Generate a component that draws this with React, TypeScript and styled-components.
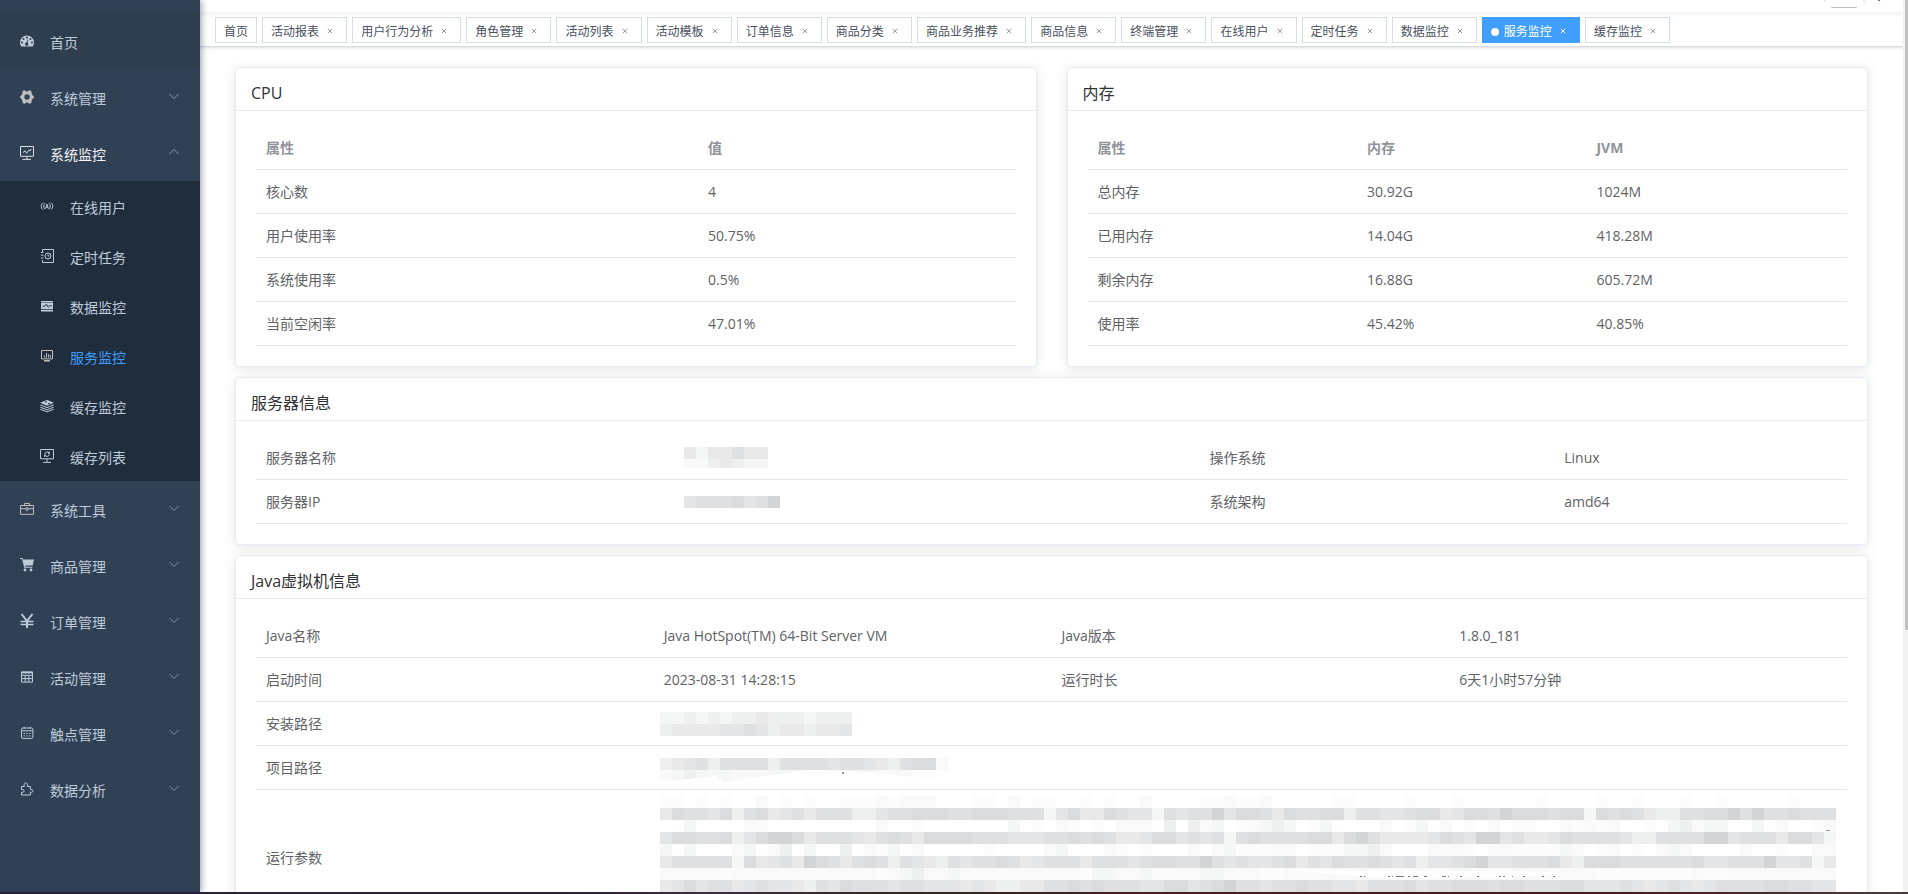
import React from "react";
import styled, { createGlobalStyle, css } from "styled-components";

const GlobalStyle = createGlobalStyle`
  *, *::before, *::after { box-sizing: border-box; }
  html, body { margin: 0; padding: 0; }
  body {
    font-family: "Open Sans", "Noto Sans CJK SC", sans-serif;
    font-size: 14px;
    color: #303133;
    background: #fff;
  }
  a { color: inherit; text-decoration: none; }
  button { font: inherit; color: inherit; border: 0; padding: 0; background: none; cursor: pointer; }
`;

/* ---------- page frame ---------- */

const Page = styled.div`
  display: grid;
  grid-template-columns: 200px minmax(0, 1fr) 5px;
  grid-template-rows: minmax(0, 1fr) 2px;
  height: 100vh;
  overflow: hidden;
`;

const Sidebar = styled.nav`
  position: relative;
  z-index: 2;
  padding-top: 13px;
  background: #304156;
  box-shadow: 2px 0 6px rgba(0, 21, 41, 0.35);
`;

const Main = styled.main`
  overflow: hidden;
`;

const ScrollTrack = styled.div`
  padding-left: 2px;
  background: #f2f2f2;
`;

const ScrollThumb = styled.div`
  height: 70.6%;
  background: #c0c0c0;
`;

const BottomEdge = styled.div`
  grid-column: 1 / -1;
  position: relative;
  z-index: 3;
  background: linear-gradient(90deg, #2a2138, #2b1f30 30%, #3f2c42 37%, #33261f 48%, #45201f 60%, #471a1a 85%, #4a3c3c);
`;

/* ---------- sidebar ---------- */

const MenuList = styled.ul`
  margin: 0;
  padding: 0;
  list-style: none;
`;

const itemLayout = css`
  display: flex;
  align-items: center;
  width: 100%;
  color: #bfcbd9;
  font-size: 14px;
  text-align: left;
`;

const RootLink = styled.a`
  ${itemLayout}
  height: 56px;
  padding: 0 20px;
  background: #2e3e4e;
`;

const RootButton = styled.button<{ $open?: boolean }>`
  ${itemLayout}
  height: 56px;
  padding: 0 20px;
  color: ${(p) => (p.$open ? "#f4f4f5" : "#bfcbd9")};
`;

const SubList = styled(MenuList)`
  background: #1f2d3d;
`;

const SubLink = styled.a<{ $active?: boolean }>`
  ${itemLayout}
  height: 50px;
  padding: 0 40px;
  color: ${(p) => (p.$active ? "#409eff" : "#bfcbd9")};
`;

const MenuLabel = styled.span`
  flex: 1;
  margin-left: 16px;
  padding-top: 3px;
  line-height: 20px;
`;

const MenuIcon = styled.svg<{ $tone?: string }>`
  flex: none;
  width: 14px;
  height: 14px;
  overflow: visible;
  color: ${(p) => p.$tone || "#bfcbd9"};
  fill: none;
  stroke: currentColor;
  stroke-width: 1;
`;

const Chevron = styled.svg<{ $up?: boolean }>`
  flex: none;
  width: 12px;
  height: 12px;
  margin-bottom: 2px;
  fill: none;
  stroke: #8a95a3;
  transform: ${(p) => (p.$up ? "rotate(180deg)" : "none")};
`;

type IconName =
  | "dashboard" | "gear" | "monitor" | "online" | "job" | "druid" | "server"
  | "redis" | "redisList" | "tool" | "cart" | "yen" | "table" | "calendar" | "puzzle";

const glyphs: Record<IconName, React.ReactNode> = {
  dashboard: (
    <path
      fill="currentColor"
      stroke="none"
      fillRule="evenodd"
      d="M7 1.4a7 7 0 0 0-7 7c0 1.4.4 2.6 1 3.7.1.2.3.3.5.3h11c.2 0 .4-.1.5-.3.6-1.1 1-2.3 1-3.7a7 7 0 0 0-7-7zM2 7.4a1 1 0 1 0 0 2 1 1 0 0 0 0-2zM3.5 3.9a1 1 0 1 0 0 2 1 1 0 0 0 0-2zM7 2.4a1 1 0 1 0 0 2 1 1 0 0 0 0-2zM10.5 3.9a1 1 0 1 0 0 2 1 1 0 0 0 0-2zM12 7.4a1 1 0 1 0 0 2 1 1 0 0 0 0-2zM7.5 5.4l.8.2-.7 3.2a1.6 1.6 0 1 1-1-.2z"
    />
  ),
  gear: (
    <path
      fill="currentColor"
      stroke="none"
      fillRule="evenodd"
      d="M3.6.4L5 .2 6 1.400h2L9 .2l1.400.2 1 .8.2 2.300 1 1.700L14 6.400v1.200l-1.400 1.200-1 1.700-.2 2.300-1 .8-1.400.2-1-1.200H6l-1 1.200-1.400-.2-1-.8-.2-2.300-1-1.700L0 7.600V6.400l1.400-1.200 1-1.700.2-2.300zM7 4.300a2.700 2.700 0 1 0 0 5.400 2.700 2.700 0 0 0 0-5.400z"
    />
  ),
  monitor: (
    <>
      <path d="M.5.5h13v9.8H.5z" />
      <path d="M3 6.6l2-1.8 1.6 2.4L9.2 4l.6 1 1.4-2" />
      <path d="M7 10.5V13M2.5 13.4h8.5" />
    </>
  ),
  online: (
    <>
      <path d="M2.9 3.6C.7 5.4.7 8.8 2.9 10.6M5 4.2C3.3 5.6 3.3 8.6 5 10M11.1 3.6c2.2 1.8 2.2 5.2 0 7M9 4.2c1.7 1.4 1.7 4.4 0 5.8" />
      <path d="M5.6 9.6L7 5.2l1.4 4.4M6.2 8.3h1.6" />
    </>
  ),
  job: (
    <>
      <path d="M2.5 3V.5h11v13h-11V11M1 3.5h2.4M1 6.2h2.4M1 9h2.4" />
      <circle cx="8" cy="7" r="3" />
      <path d="M8 5.4V7h1.6" />
    </>
  ),
  druid: (
    <>
      <path fill="currentColor" stroke="none" d="M1 2h12v1.2H1zM1 3.800h12v6.400H1zM1 11h12v1.500H1z" />
      <path stroke="#1f2d3d" d="M2.6 7.2h2.2l1.6-2 1.8 3 1.4-1.4H12" />
    </>
  ),
  server: (
    <>
      <path d="M1.5 1.5h11v8.4h-11z" />
      <path d="M4.6 8.6V6.4M6.6 8.6V4M8.6 8.6V5.2M10.4 8.6V6" />
      <path strokeWidth="1.5" d="M4 11.8h6" />
    </>
  ),
  redis: (
    <>
      <path fill="currentColor" stroke="none" d="M7 1l7 2.8-7 2.9L0 3.8z" />
      <path d="M.3 6L7 8.6 13.7 6M.3 8.2L7 10.8l6.7-2.6M.3 10.3L7 12.8l6.7-2.5" />
      <path stroke="#1f2d3d" d="M5 3h2M8 4.6h2" />
    </>
  ),
  redisList: (
    <>
      <path d="M.5.5h13v9.3H.5z" />
      <path d="M9.2 4.2A2.4 2.4 0 0 0 4.7 5M4.8 6.2a2.4 2.4 0 0 0 4.5-.8M9.4 2.6v1.8H8M4.6 7.8V6h1.6" />
      <path d="M7 10v3M3 13.4h8" />
    </>
  ),
  tool: (
    <>
      <path d="M.5 3.5h13v8.8H.5zM4.5 3.3V1.4h5v1.9M.5 6.7h4.8M8.7 6.7h4.8" />
      <path d="M6 5.8h2v2.4H6z" />
    </>
  ),
  cart: (
    <>
      <path fill="currentColor" stroke="none" d="M0 0h2.6l.5 1.4H14l-1.3 6.2H5.2l.3 1.2h6.9v1H4.2L2.1 1.1H0z" />
      <circle cx="5" cy="12" r="1.4" fill="currentColor" stroke="none" />
      <circle cx="11" cy="12" r="1.4" fill="currentColor" stroke="none" />
    </>
  ),
  yen: (
    <>
      <path strokeWidth="2" d="M1.500 0L7 7 12.500 0M7 7v7" />
      <path strokeWidth="1.300" d="M.5 7.500h13M.5 10.500h13" />
    </>
  ),
  table: (
    <>
      <path d="M1.5 1.9h11v10.2h-11z" />
      <path strokeWidth="1.6" d="M1.5 2.6h11" />
      <path d="M1.5 5.3h11M1.5 8.6h11M5.2 5v7M8.8 5v7" />
    </>
  ),
  calendar: (
    <>
      <rect x="1.5" y="2" width="11.4" height="10.4" rx="1.4" />
      <path d="M1.5 4.8h11.4M4.2.8v2M10.2.8v2" />
      <path strokeDasharray="1.4 1.3" d="M3.6 7.5h7.6M3.6 9.9h7.6" />
    </>
  ),
  puzzle: (
    <path d="M1.500 4.500h2.700V2.500c0-1 .6-1.700 1.600-1.700s1.600.7 1.600 1.700v2h3v3h1c1 0 1.600.6 1.600 1.400s-.6 1.400-1.600 1.400h-1v2.700H1.500v-2.700h1.200c.9 0 1.400-.6 1.400-1.400s-.5-1.400-1.400-1.400H1.500z" />
  ),
};

function Icon({ name, tone }: { name: IconName; tone?: string }) {
  return (
    <MenuIcon viewBox="0 0 14 14" $tone={tone} aria-hidden="true">
      {glyphs[name]}
    </MenuIcon>
  );
}

interface SubItem { label: string; icon: IconName; active?: boolean; tone?: string }
interface RootItem { label: string; icon: IconName; tone?: string; children?: SubItem[] }

const menu: RootItem[] = [
  { label: "系统管理", icon: "gear", tone: "#bfbfbf" },
  {
    label: "系统监控",
    icon: "monitor",
    tone: "#d9dce1",
    children: [
      { label: "在线用户", icon: "online" },
      { label: "定时任务", icon: "job" },
      { label: "数据监控", icon: "druid" },
      { label: "服务监控", icon: "server", active: true, tone: "#bfbfbf" },
      { label: "缓存监控", icon: "redis" },
      { label: "缓存列表", icon: "redisList" },
    ],
  },
  { label: "系统工具", icon: "tool", tone: "#bfbfbf" },
  { label: "商品管理", icon: "cart" },
  { label: "订单管理", icon: "yen" },
  { label: "活动管理", icon: "table" },
  { label: "触点管理", icon: "calendar" },
  { label: "数据分析", icon: "puzzle" },
];

function SideMenu() {
  return (
    <Sidebar aria-label="主菜单">
      <MenuList>
        <li>
          <RootLink href="#home">
            <Icon name="dashboard" />
            <MenuLabel>首页</MenuLabel>
          </RootLink>
        </li>
        {menu.map((item) => (
          <li key={item.label}>
            <RootButton type="button" $open={!!item.children} aria-expanded={!!item.children}>
              <Icon name={item.icon} tone={item.tone} />
              <MenuLabel>{item.label}</MenuLabel>
              <Chevron viewBox="0 0 12 12" $up={!!item.children} aria-hidden="true">
                <path d="M1.500 4L6 8.500 10.500 4" />
              </Chevron>
            </RootButton>
            {item.children && (
              <SubList>
                {item.children.map((sub) => (
                  <li key={sub.label}>
                    <SubLink href={`#${sub.icon}`} $active={sub.active}>
                      <Icon name={sub.icon} tone={sub.tone} />
                      <MenuLabel>{sub.label}</MenuLabel>
                    </SubLink>
                  </li>
                ))}
              </SubList>
            )}
          </li>
        ))}
      </MenuList>
    </Sidebar>
  );
}

/* ---------- top bar and page tabs ---------- */

const Navbar = styled.header`
  display: flex;
  justify-content: flex-end;
  height: 13px;
  padding-right: 20px;
  box-shadow: 0 1px 4px rgba(0, 21, 41, 0.08);
`;

const AvatarEdge = styled.svg`
  width: 60px;
  height: 10px;
`;

const TagBar = styled.div`
  height: 34px;
  padding: 4px 15px 0;
  overflow: hidden;
  white-space: nowrap;
  border-bottom: 1px solid #d8dce5;
`;

const TagBarShadow = styled.div`
  box-shadow: 0 1px 3px 0 rgba(0, 0, 0, 0.12), 0 0 3px 0 rgba(0, 0, 0, 0.04);
`;

const TagRow = styled.div`
  display: flex;
  gap: 5px;
`;

const Tag = styled.div<{ $active?: boolean }>`
  flex: none;
  height: 26px;
  padding: 0 8px;
  border: 1px solid ${(p) => (p.$active ? "#409eff" : "#d8dce5")};
  background: ${(p) => (p.$active ? "#409eff" : "#fff")};
  color: ${(p) => (p.$active ? "#fff" : "#495060")};
  font-size: 12px;
  line-height: 28px;
`;

const Dot = styled.i`
  display: inline-block;
  width: 8px;
  height: 8px;
  margin-right: 5px;
  border-radius: 50%;
  background: #fff;
`;

const CloseButton = styled.button`
  width: 16px;
  height: 16px;
  line-height: 16px;
  vertical-align: -3px;
`;

const Cross = styled.svg<{ $active?: boolean }>`
  display: block;
  width: 16px;
  height: 16px;
  fill: none;
  stroke: ${(p) => (p.$active ? "#fff" : "#9a9ea6")};
`;

const tags = [
  "首页", "活动报表", "用户行为分析", "角色管理", "活动列表", "活动模板", "订单信息", "商品分类",
  "商品业务推荐", "商品信息", "终端管理", "在线用户", "定时任务", "数据监控", "服务监控", "缓存监控",
];

function TagsView() {
  return (
    <TagBarShadow>
      <TagBar>
        <TagRow>
          {tags.map((name, i) => {
            const active = name === "服务监控";
            return (
              <Tag key={name} $active={active}>
                {active && <Dot />}
                <a href={`#tag-${i}`}>{name}</a>
                {i > 0 && (
                  <>
                    {" "}
                    <CloseButton type="button" aria-label={`关闭${name}`}>
                      <Cross viewBox="0 0 16 16" $active={active} aria-hidden="true">
                        <path d="M5.800 5.800l4.400 4.400M10.200 5.800l-4.400 4.400" />
                      </Cross>
                    </CloseButton>
                  </>
                )}
              </Tag>
            );
          })}
        </TagRow>
      </TagBar>
    </TagBarShadow>
  );
}

/* ---------- cards and tables ---------- */

const Content = styled.div`
  display: grid;
  grid-template-columns: repeat(2, minmax(0, 1fr));
  column-gap: 30px;
  row-gap: 10px;
  padding: 20px 35px;
`;

const CardBox = styled.section<{ $wide?: boolean }>`
  grid-column: ${(p) => (p.$wide ? "1 / -1" : "auto")};
  border: 1px solid #e6ebf5;
  border-radius: 4px;
  background: #fff;
  box-shadow: 0 2px 12px 0 rgba(0, 0, 0, 0.1);
`;

const CardTitle = styled.h2`
  margin: 0;
  padding: 15px 15px 6px;
  border-bottom: 1px solid #e6ebf5;
  font-size: 16px;
  font-weight: 400;
  line-height: 21px;
`;

const CardBody = styled.div`
  padding: 15px 20px 20px;
`;

const Table = styled.table`
  width: 100%;
  table-layout: fixed;
  border-collapse: separate;
  border-spacing: 0;
  color: #606266;
  font-size: 14px;
`;

const cell = css`
  height: 44px;
  padding: 0 10px;
  border-bottom: 1px solid #dfe6ec;
  line-height: 23px;
  text-align: left;
  vertical-align: middle;
`;

const Th = styled.th`
  ${cell}
  color: #909399;
  font-weight: 700;
`;

const Td = styled.td`
  ${cell}
`;

const MosaicTd = styled.td<{ $inset?: number }>`
  ${cell}
  padding: 0 0 0 ${(p) => p.$inset ?? 6}px;
`;

const ParamTd = styled.td`
  height: 134px;
  padding: 0 10px;
  line-height: 23px;
`;

const ParamMosaicTd = styled.td`
  padding: 6px 0 0 6px;
  vertical-align: top;
`;

const MosaicSvg = styled.svg`
  display: block;
  shape-rendering: crispEdges;
`;

const Col = styled.col<{ $w: number }>`
  width: ${(p) => p.$w}%;
`;

function Card({ title, wide, children }: { title: string; wide?: boolean; children: React.ReactNode }) {
  return (
    <CardBox $wide={wide}>
      <CardTitle>{title}</CardTitle>
      <CardBody>{children}</CardBody>
    </CardBox>
  );
}

function DataTable({ widths, head, rows }: { widths: number[]; head: string[]; rows: string[][] }) {
  return (
    <Table>
      <colgroup>
        {widths.map((w, i) => (
          <Col key={i} $w={w} />
        ))}
      </colgroup>
      <thead>
        <tr>
          {head.map((h) => (
            <Th key={h} scope="col">{h}</Th>
          ))}
        </tr>
      </thead>
      <tbody>
        {rows.map((r) => (
          <tr key={r[0]}>
            {r.map((c) => (
              <Td key={c}>{c}</Td>
            ))}
          </tr>
        ))}
      </tbody>
    </Table>
  );
}

/* Redacted values: each digit is one 12px block, 0 is blank and 9 is darkest. */
const shades = ["", "#fcfcfc", "#f9f9f9", "#f5f6f6", "#eeefef", "#e9e9ea", "#e4e5e6", "#dfe0e1", "#dadbdc", "#d3d4d5"];

function Mosaic({ rows, heights, children }: { rows: string[]; heights: number[]; children?: React.ReactNode }) {
  const width = Math.max(...rows.map((r) => r.length)) * 12;
  const height = heights.reduce((a, b) => a + b, 0);
  let y = 0;
  return (
    <MosaicSvg width={width} height={height} viewBox={`0 0 ${width} ${height}`} role="img" aria-label="已隐藏">
      {rows.map((row, r) => {
        const top = y;
        y += heights[r];
        return row.split("").map((d, c) =>
          d === "0" ? null : (
            <rect key={`${r}-${c}`} x={c * 12} y={top} width={12} height={heights[r]} fill={shades[Number(d)]} />
          )
        );
      })}
      {children}
    </MosaicSvg>
  );
}

const paramRows = [
  "11010100201010011121222000110201100101002000011211200000110000100010000001000010010001001000001000",
  "58776847856757774467788877888777368558766376779688758778847766788568879888788387875447788979778777",
  "00300002200000000020010000000301021010222040423012343013000020130201020110021212001034233003020012",
  "68877846899857776578758888777666778787556886767378777788589755556876996755687777644777799677758863",
  "30300023024030040213020000010000230002101000202311122011133420002221022111132012010232000020010022",
  "57777738567598757874765476778756777577767887797676678576877876746678966777854888777777866777966735",
  "22222122222222222212342232222222222133223222233222112222223222222233222322222211111111211222222222",
  "56867756766547687776776665654455778787776688678977677877665777867788878877788666765676567777887766",
];

const remnants = [
  [700, 2], [704, 1], [728, 2], [732, 1], [736, 8], [748, 2], [753, 5], [764, 3], [782, 4], [788, 1],
  [800, 2], [817, 2], [839, 2], [843, 2], [852, 1], [863, 2], [882, 2], [893, 2],
];

export default function App() {
  return (
    <>
      <GlobalStyle />
      <Page>
        <SideMenu />
        <Main>
          <Navbar>
            <AvatarEdge viewBox="0 0 60 10" aria-hidden="true">
              <path d="M2 0v2M41 0v2" stroke="#dcdcdc" />
              <path d="M8.500 7.500h25" stroke="#c0c0c0" strokeLinecap="round" />
              <path d="M55 0h2v1h-2z" fill="#8d6b55" />
            </AvatarEdge>
          </Navbar>
          <TagsView />
          <Content>
            <Card title="CPU">
              <DataTable
                widths={[58.2, 41.8]}
                head={["属性", "值"]}
                rows={[
                  ["核心数", "4"],
                  ["用户使用率", "50.75%"],
                  ["系统使用率", "0.5%"],
                  ["当前空闲率", "47.01%"],
                ]}
              />
            </Card>
            <Card title="内存">
              <DataTable
                widths={[35.5, 30.2, 34.3]}
                head={["属性", "内存", "JVM"]}
                rows={[
                  ["总内存", "30.92G", "1024M"],
                  ["已用内存", "14.04G", "418.28M"],
                  ["剩余内存", "16.88G", "605.72M"],
                  ["使用率", "45.42%", "40.85%"],
                ]}
              />
            </Card>
            <Card title="服务器信息" wide>
              <Table>
                <colgroup>
                  <Col $w={26} />
                  <Col $w={33.3} />
                  <Col $w={22.3} />
                  <Col $w={18.4} />
                </colgroup>
                <tbody>
                  <tr>
                    <Td>服务器名称</Td>
                    <MosaicTd $inset={14}>
                      <Mosaic rows={["5355755", "2245433"]} heights={[12, 9]} />
                    </MosaicTd>
                    <Td>操作系统</Td>
                    <Td>Linux</Td>
                  </tr>
                  <tr>
                    <Td>服务器IP</Td>
                    <MosaicTd $inset={14}>
                      <Mosaic rows={["67778679"]} heights={[12]} />
                    </MosaicTd>
                    <Td>系统架构</Td>
                    <Td>amd64</Td>
                  </tr>
                </tbody>
              </Table>
            </Card>
            <Card title="Java虚拟机信息" wide>
              <Table>
                <colgroup>
                  <Col $w={25} />
                  <Col $w={25} />
                  <Col $w={25} />
                  <Col $w={25} />
                </colgroup>
                <tbody>
                  <tr>
                    <Td>Java名称</Td>
                    <Td>Java HotSpot(TM) 64-Bit Server VM</Td>
                    <Td>Java版本</Td>
                    <Td>1.8.0_181</Td>
                  </tr>
                  <tr>
                    <Td>启动时间</Td>
                    <Td>2023-08-31 14:28:15</Td>
                    <Td>运行时长</Td>
                    <Td>6天1小时57分钟</Td>
                  </tr>
                  <tr>
                    <Td>安装路径</Td>
                    <MosaicTd colSpan={3}>
                      <Mosaic rows={["3343434454443444", "4555566764554556"]} heights={[12, 12]} />
                    </MosaicTd>
                  </tr>
                  <tr>
                    <Td>项目路径</Td>
                    <MosaicTd colSpan={3}>
                      <Mosaic rows={["000000000000000000000000", "456747777477776776547882", "234333222332222333222110"]} heights={[4, 12, 12]}>
                        <path d="M0 28L56 22l8 6 56-8 32-4 60 2 64 8v2z" fill="#fff" />
                        <path d="M182 18h2v2h-2z" fill="#8c8c98" />
                      </Mosaic>
                    </MosaicTd>
                  </tr>
                  <tr>
                    <ParamTd>运行参数</ParamTd>
                    <ParamMosaicTd colSpan={3}>
                      <Mosaic rows={paramRows} heights={[12, 12, 12, 12, 12, 12, 12, 12]}>
                        <path d="M630 74l40 4 60 4h120l60-5-60-2H690z" fill="#fff" />
                        {remnants.map(([x, w]) => (
                          <rect key={x} x={x} y={80} width={w} height={1} fill="#7a7a80" />
                        ))}
                        <path d="M1166 34h4v1h-4z" fill="#9a9aa0" />
                      </Mosaic>
                    </ParamMosaicTd>
                  </tr>
                </tbody>
              </Table>
            </Card>
          </Content>
        </Main>
        <ScrollTrack>
          <ScrollThumb />
        </ScrollTrack>
        <BottomEdge />
      </Page>
    </>
  );
}
